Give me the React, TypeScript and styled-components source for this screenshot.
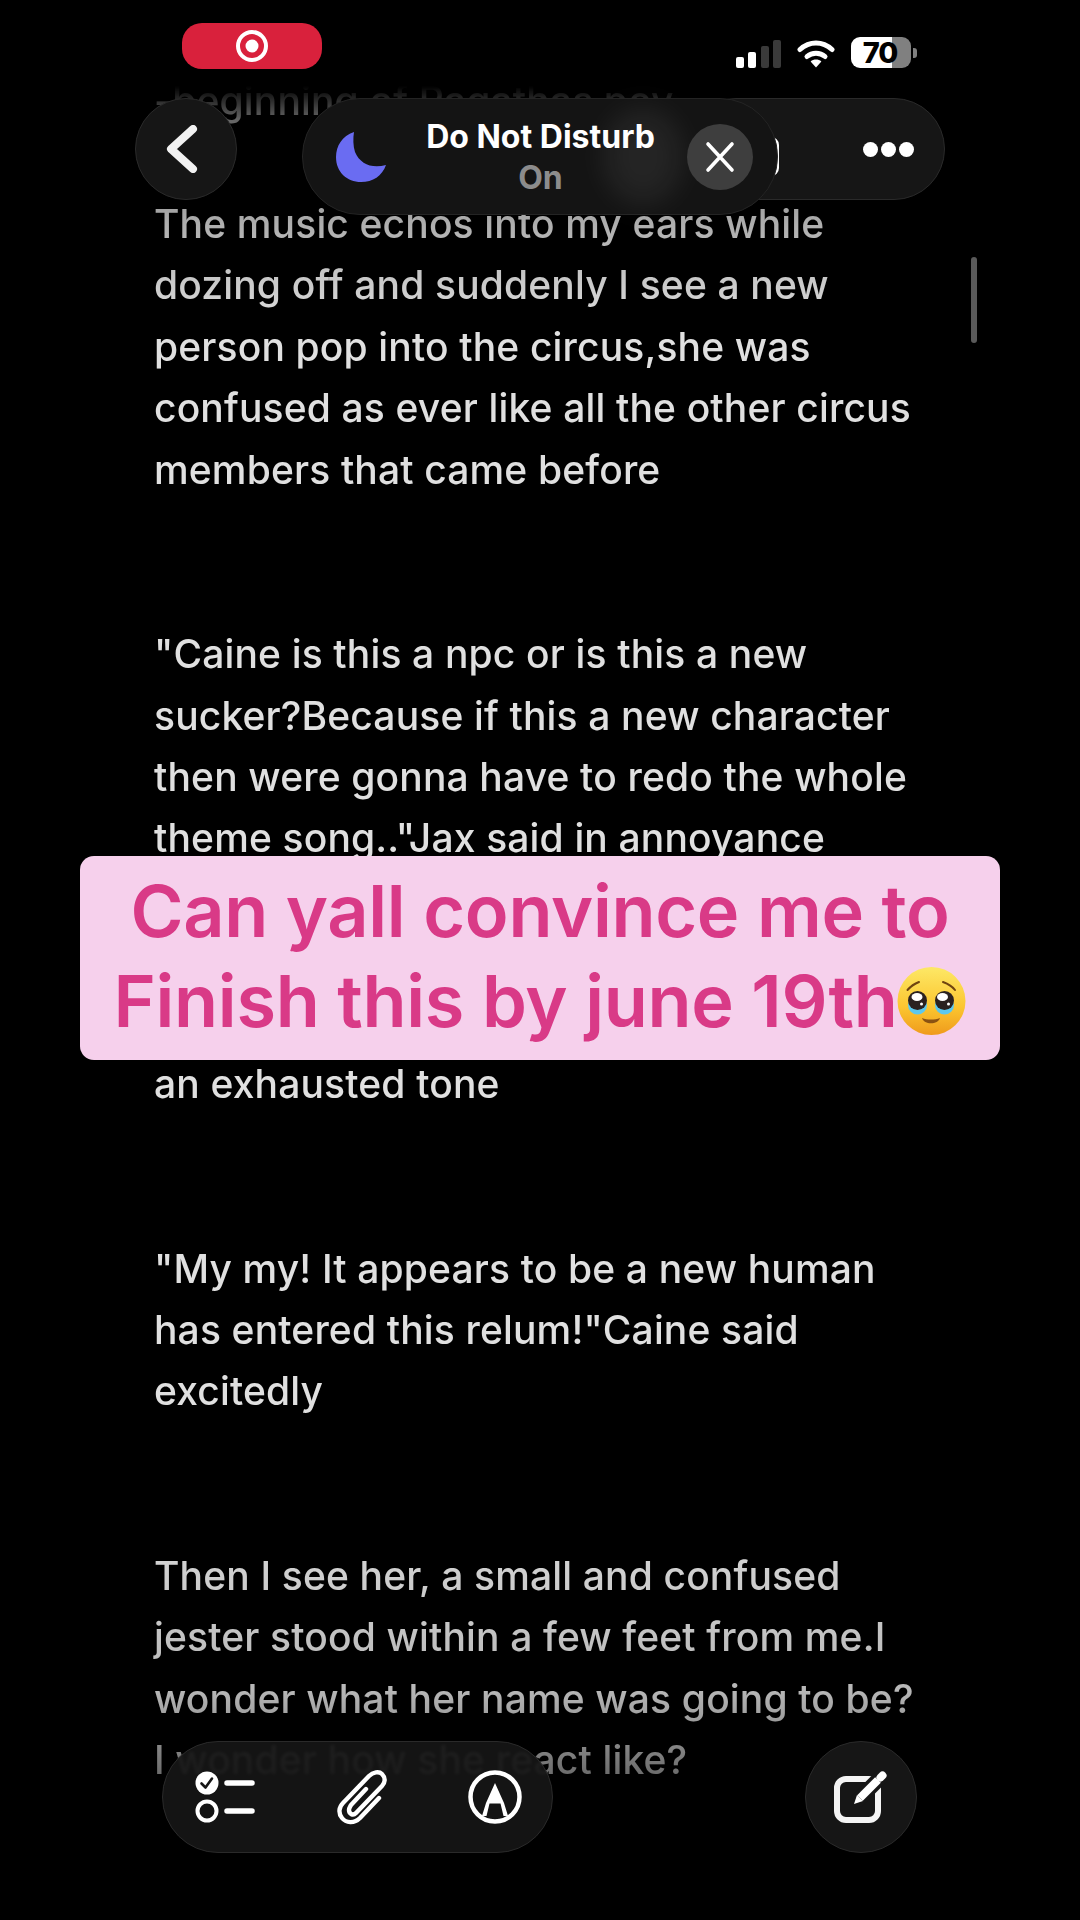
import React from "react";
import styled, { createGlobalStyle } from "styled-components";

const GlobalStyle = createGlobalStyle`
  html, body {
    margin: 0;
    padding: 0;
    background: #000;
  }
  * {
    box-sizing: border-box;
  }
`;

const paragraphs = [
  { gap: 0, lines: ["-beginning of Ragathas pov"] },
  {
    gap: 1,
    lines: [
      "The music echos into my ears while",
      "dozing off and suddenly I see a new",
      "person pop into the circus,she was",
      "confused as ever like all the other circus",
      "members that came before",
    ],
  },
  {
    gap: 2,
    lines: [
      '"Caine is this a npc or is this a new',
      "sucker?Because if this a new character",
      "then were gonna have to redo the whole",
      'theme song.."Jax said in annoyance',
    ],
  },
  { gap: 3, lines: ["an exhausted tone"] },
  {
    gap: 2,
    lines: [
      '"My my! It appears to be a new human',
      'has entered this relum!"Caine said',
      "excitedly",
    ],
  },
  {
    gap: 2,
    lines: [
      "Then I see her, a small and confused",
      "jester stood within a few feet from me.I",
      "wonder what her name was going to be?",
      "I wonder how she react like?",
    ],
  },
];

function TargetIcon() {
  return (
    <svg width="34" height="34" viewBox="0 0 34 34">
      <circle cx="17" cy="17" r="14" fill="none" stroke="#fff" strokeWidth="4" />
      <circle cx="17" cy="17" r="6.5" fill="#fff" />
    </svg>
  );
}

function WifiIcon() {
  return (
    <svg width="38" height="29" viewBox="0 0 38 29">
      <path d="M3 10.5C12.5 1.8 25.5 1.8 35 10.5" fill="none" stroke="#fff" strokeWidth="5" strokeLinecap="round" />
      <path d="M10 17.5C15 13 23 13 28 17.5" fill="none" stroke="#fff" strokeWidth="5" strokeLinecap="round" />
      <path d="M13.6 22.4C16.6 19.8 21.4 19.8 24.4 22.4L19 28.6Z" fill="#fff" />
    </svg>
  );
}

function BackIcon() {
  return (
    <svg width="32" height="48" viewBox="0 0 32 48">
      <path d="M27 4L5 24L27 44" fill="none" stroke="#f2f2f2" strokeWidth="8" strokeLinecap="round" strokeLinejoin="round" />
    </svg>
  );
}

function MoonIcon() {
  return (
    <svg width="50" height="50" viewBox="0 0 50 50">
      <path d="M18 0C6 4 0 14 0 25C0 40 11 50 25 50C37 50 46 44 50 33C36 37 24 32 19 20C17 14 17 6 18 0Z" fill="#6a6cf2" />
    </svg>
  );
}

function CloseIcon() {
  return (
    <svg width="30" height="32" viewBox="0 0 30 32">
      <path d="M3 3L27 29M27 3L3 29" fill="none" stroke="#fff" strokeWidth="3.6" strokeLinecap="round" />
    </svg>
  );
}

function ChecklistIcon() {
  return (
    <svg width="60" height="52" viewBox="0 0 60 52">
      <circle cx="12" cy="12" r="11.5" fill="#fff" />
      <path d="M6.500 12.500L10.500 16.500L17 7.500" fill="none" stroke="#161616" strokeWidth="2.6" strokeLinecap="round" strokeLinejoin="round" />
      <circle cx="12" cy="40" r="9.500" fill="none" stroke="#fff" strokeWidth="4" />
      <path d="M32 12H57M32 40H57" stroke="#fff" strokeWidth="5.500" strokeLinecap="round" />
    </svg>
  );
}

function ClipIcon() {
  return (
    <svg width="51" height="56" viewBox="0 0 51 56">
      <path
        d="M43 29L24 49C18 55 10 54 6 49C2 44 3 38 7 34L33 7C37 3 43 2 46 5C50 9 49 14 46 17L20 44C17 47 13 45 13 41C13 39 14 38 15 36L30 20"
        fill="none"
        stroke="#fff"
        strokeWidth="4.400"
        strokeLinecap="round"
        strokeLinejoin="round"
      />
    </svg>
  );
}

function MarkupIcon() {
  return (
    <svg width="54" height="54" viewBox="0 0 54 54">
      <circle cx="27" cy="27" r="24.500" fill="none" stroke="#fff" strokeWidth="4.500" />
      <path d="M27 13L36 33L40 46H35.500L32.500 33.500H21.500L18.500 46H14L18 33Z" fill="#fff" />
    </svg>
  );
}

function ComposeIcon() {
  return (
    <svg width="54" height="54" viewBox="0 0 54 54">
      <rect x="3" y="9" width="41" height="41" rx="9" fill="none" stroke="#f4f4f4" strokeWidth="6" />
      <path d="M22 32L50 4" stroke="#161616" strokeWidth="15" />
      <path d="M20 34L23 25L29 31Z" fill="#fff" />
      <path d="M26 28L44 10" stroke="#fff" strokeWidth="8" />
      <path d="M46.500 7.500L48.500 5.500" stroke="#fff" strokeWidth="8" strokeLinecap="round" />
    </svg>
  );
}

function PleadingFace() {
  return (
    <svg width="69" height="68" viewBox="0 0 69 68">
      <defs>
        <linearGradient id="faceFill" x1="0" y1="0" x2="0" y2="1">
          <stop offset="0%" stopColor="#fde866" />
          <stop offset="60%" stopColor="#fbc52f" />
          <stop offset="100%" stopColor="#ef9a1c" />
        </linearGradient>
      </defs>
      <circle cx="34.500" cy="34" r="34" fill="url(#faceFill)" />
      <path d="M10.500 23C14 19 18 16.500 22 15M46 15C50 16.500 55 19 58 23" fill="none" stroke="#6f4410" strokeWidth="2" strokeLinecap="round" />
      <circle cx="20.500" cy="38" r="9.500" fill="#5cc8ee" />
      <circle cx="47.500" cy="38" r="9.500" fill="#5cc8ee" />
      <circle cx="20.500" cy="33.500" r="9.500" fill="#2a2120" />
      <circle cx="47.500" cy="33.500" r="9.500" fill="#2a2120" />
      <ellipse cx="20" cy="30" rx="5.500" ry="4" fill="#fff" />
      <ellipse cx="45.500" cy="30" rx="5.500" ry="4" fill="#fff" />
      <circle cx="24.500" cy="37" r="1.500" fill="#fff" />
      <circle cx="51.500" cy="37" r="1.500" fill="#fff" />
      <path d="M25 51C30 53 38 53 43 51C41 58 27 58 25 51Z" fill="#8a5212" />
    </svg>
  );
}

export default function App() {
  return (
    <Page>
      <GlobalStyle />
      <StatusBar>
        <RecordPill>
          <TargetIcon />
        </RecordPill>
        <StatusIcons>
          <SignalBars>
            <SignalBar $height={11} />
            <SignalBar $height={16} />
            <SignalBar $height={22} $dim />
            <SignalBar $height={28} $dim />
          </SignalBars>
          <WifiIcon />
          <Battery>
            <BatteryBody $level={68}>70</BatteryBody>
            <BatteryNub />
          </Battery>
        </StatusIcons>
      </StatusBar>

      <Article>
        {paragraphs.map((p, i) => (
          <Paragraph key={i} $gap={p.gap}>
            {p.lines.map((line) => (
              <Line key={line}>{line}</Line>
            ))}
          </Paragraph>
        ))}
      </Article>

      <ScrollThumb />

      <TopControls>
        <RoundButton>
          <BackIcon />
        </RoundButton>
        <ActionsPill>
          <PartialIcon />
          <Dots>
            <Dot />
            <Dot />
            <Dot />
          </Dots>
        </ActionsPill>
      </TopControls>

      <FocusBanner>
        <MoonIcon />
        <FocusText>
          <FocusTitle>Do Not Disturb</FocusTitle>
          <FocusState>On</FocusState>
        </FocusText>
        <CloseButton>
          <CloseIcon />
        </CloseButton>
      </FocusBanner>

      <Caption>
        <CaptionLine>Can yall convince me to</CaptionLine>
        <CaptionLine>
          Finish this by june 19th
          <PleadingFace />
        </CaptionLine>
      </Caption>

      <BottomControls>
        <ToolsPill>
          <ChecklistIcon />
          <ClipIcon />
          <MarkupIcon />
        </ToolsPill>
        <ComposeButton>
          <ComposeIcon />
        </ComposeButton>
      </BottomControls>
    </Page>
  );
}

const Page = styled.div`
  position: relative;
  width: 1080px;
  height: 1920px;
  overflow: hidden;
  background: #000;
  font-family: Inter, "Liberation Sans", sans-serif;
`;

const StatusBar = styled.div`
  height: 70px;
  padding: 23px 163px 0 182px;
  display: flex;
  justify-content: space-between;
  align-items: flex-start;
`;

const RecordPill = styled.div`
  width: 140px;
  height: 46px;
  border-radius: 20px;
  background: #d9213c;
  display: flex;
  align-items: center;
  justify-content: center;
`;

const StatusIcons = styled.div`
  margin-top: 14px;
  display: flex;
  align-items: flex-end;
  gap: 16px;
`;

const SignalBars = styled.div`
  display: flex;
  align-items: flex-end;
  gap: 4.500px;
  height: 29px;
`;

const SignalBar = styled.div<{ $height: number; $dim?: boolean }>`
  width: 8px;
  height: ${(p) => p.$height}px;
  border-radius: 2px;
  background: ${(p) => (p.$dim ? "#3a3a3a" : "#fff")};
`;

const Battery = styled.div`
  display: flex;
  align-items: center;
  gap: 2px;
`;

const BatteryBody = styled.div<{ $level: number }>`
  width: 60px;
  height: 31px;
  border-radius: 9px;
  background: linear-gradient(
    to right,
    #fff ${(p) => p.$level}%,
    #808080 ${(p) => p.$level}%
  );
  color: #000;
  font-size: 29px;
  font-weight: 800;
  letter-spacing: -1px;
  line-height: 31px;
  text-align: center;
  padding-right: 2px;
`;

const BatteryNub = styled.div`
  width: 4px;
  height: 10px;
  border-radius: 0 3px 3px 0;
  background: #808080;
`;

const Article = styled.div`
  padding-left: 154px;
  color: #e0e0e0;
  font-size: 39px;
  font-weight: 500;
  letter-spacing: 0.150px;
  line-height: 61.450px;
  white-space: nowrap;
  mask-image: linear-gradient(
    to bottom,
    transparent 16px,
    rgba(0, 0, 0, 0.45) 50px,
    rgba(0, 0, 0, 0.78) 155px,
    #000 260px,
    #000 1420px,
    rgba(0, 0, 0, 0.82) 1620px,
    rgba(0, 0, 0, 0.42) 1720px
  );
`;

const Paragraph = styled.div<{ $gap: number }>`
  margin-top: ${(p) => p.$gap * 61.45}px;
`;

const Line = styled.div``;

const ScrollThumb = styled.div`
  position: absolute;
  left: 971px;
  top: 257px;
  width: 6px;
  height: 86px;
  border-radius: 3px;
  background: #5a5a5a;
`;

const TopControls = styled.div`
  position: absolute;
  left: 135px;
  top: 98px;
  width: 810px;
  display: flex;
  justify-content: space-between;
`;

const RoundButton = styled.div`
  width: 102px;
  height: 102px;
  border-radius: 50%;
  background: #161616;
  border: 1px solid #2a2a2a;
  display: flex;
  align-items: center;
  justify-content: center;
  padding-right: 8px;
`;

const ActionsPill = styled.div`
  width: 260px;
  height: 102px;
  border-radius: 51px;
  background: #161616;
  border: 1px solid #2a2a2a;
  padding-right: 30px;
  display: flex;
  align-items: center;
  justify-content: flex-end;
  gap: 84px;
`;

const PartialIcon = styled.div`
  width: 30px;
  height: 39px;
  margin-top: 14px;
  border: 3px solid #fff;
  border-radius: 8px;
`;

const Dots = styled.div`
  display: flex;
  gap: 3px;
`;

const Dot = styled.div`
  width: 15px;
  height: 15px;
  border-radius: 50%;
  background: #fff;
`;

const FocusBanner = styled.div`
  position: absolute;
  left: 302px;
  top: 98px;
  width: 476px;
  height: 117px;
  border-radius: 58px;
  background: #141414;
  border: 1px solid #242424;
  padding-left: 33px;
  display: flex;
  align-items: center;

  &::after {
    content: "";
    position: absolute;
    left: 300px;
    top: 10px;
    width: 80px;
    height: 95px;
    border-radius: 50%;
    background: rgba(255, 255, 255, 0.07);
    filter: blur(14px);
  }
`;

const FocusText = styled.div`
  width: 233px;
  margin-left: 38px;
  display: flex;
  flex-direction: column;
  align-items: center;
  font-size: 32px;
  font-weight: 700;
  line-height: 41px;
`;

const FocusTitle = styled.div`
  color: #fff;
  white-space: nowrap;
`;

const FocusState = styled.div`
  color: #8c8c8c;
`;

const CloseButton = styled.div`
  position: relative;
  z-index: 1;
  margin-left: 30px;
  width: 66px;
  height: 66px;
  border-radius: 50%;
  background: #3e3e3e;
  display: flex;
  align-items: center;
  justify-content: center;
`;

const Caption = styled.div`
  position: absolute;
  left: 80px;
  top: 856px;
  width: 920px;
  height: 204px;
  border-radius: 14px;
  background: #f6d0ec;
  color: #d93a87;
  font-size: 72px;
  font-weight: 600;
  letter-spacing: -0.300px;
  line-height: 90px;
  padding-top: 10px;
  white-space: nowrap;
`;

const CaptionLine = styled.div`
  display: flex;
  align-items: center;
  justify-content: center;
`;

const BottomControls = styled.div`
  position: absolute;
  left: 162px;
  top: 1741px;
  width: 755px;
  display: flex;
  justify-content: space-between;
`;

const ToolsPill = styled.div`
  width: 391px;
  height: 112px;
  border-radius: 56px;
  background: rgba(22, 22, 22, 0.92);
  backdrop-filter: blur(1.500px);
  border: 1px solid #2a2a2a;
  padding: 0 30px 0 32px;
  display: flex;
  align-items: center;
  justify-content: space-between;
`;

const ComposeButton = styled.div`
  width: 112px;
  height: 112px;
  border-radius: 50%;
  background: #161616;
  border: 1px solid #2a2a2a;
  display: flex;
  align-items: center;
  justify-content: center;
`;
